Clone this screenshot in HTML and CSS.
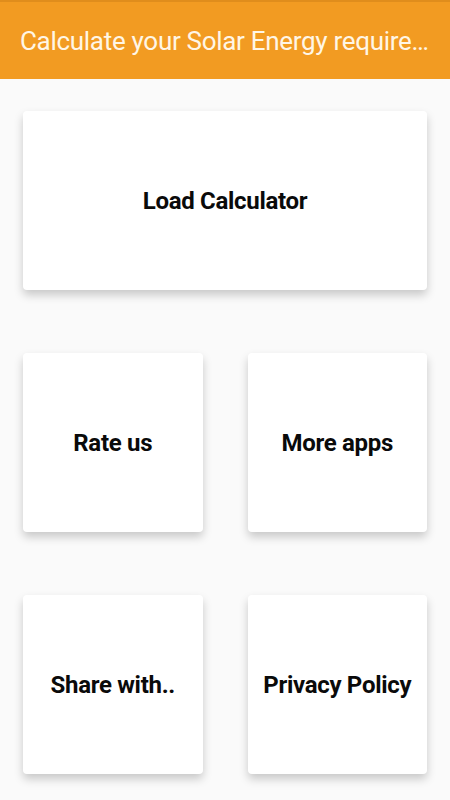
FILE: index.html
```html
<!DOCTYPE html>
<html>
    <head>
        <meta charset="UTF-8">
        <link rel="stylesheet" href="styles.css">
        <title>Solar Energy</title>
    </head>
    <body>
        <div class="toolbar">
            <h1 class="toolbar-title">Calculate your Solar Energy require…</h1>
        </div>
        <div class="menu">
            <div class="card wide">Load Calculator</div>
            <div class="card">Rate us</div>
            <div class="card">More apps</div>
            <div class="card">Share with..</div>
            <div class="card">Privacy Policy</div>
        </div>
    </body>
</html>
```

FILE: styles.css
```css
html,body{
    margin:0;
    height:100%;
    width:100%;
}
body{
    background-color:#fafafa;
    font-family:Roboto, "Liberation Sans", sans-serif;
}
.toolbar{
    height:79px;
    background-color:#f29b22;
    border-top:2px solid #e08d1c;
    box-sizing:border-box;
    display:flex;
    align-items:center;
    padding:0 20px;
}
.toolbar-title{
    margin:0;
    color:#fff6e6;
    font-size:26px;
    font-weight:normal;
    letter-spacing:-0.3px;
    white-space:nowrap;
}
.menu{
    display:grid;
    grid-template-columns:1fr 1fr;
    column-gap:45px;
    row-gap:63px;
    padding:32px 23px 0 23px;
}
.card{
    height:179px;
    background-color:#fff;
    border-radius:4px;
    box-shadow:0 5px 10px rgba(0,0,0,0.2);
    display:flex;
    align-items:center;
    justify-content:center;
    font-size:24px;
    font-weight:bold;
    letter-spacing:-0.3px;
    color:#0a0a0a;
}
.wide{
    grid-column:1 / span 2;
}
```
